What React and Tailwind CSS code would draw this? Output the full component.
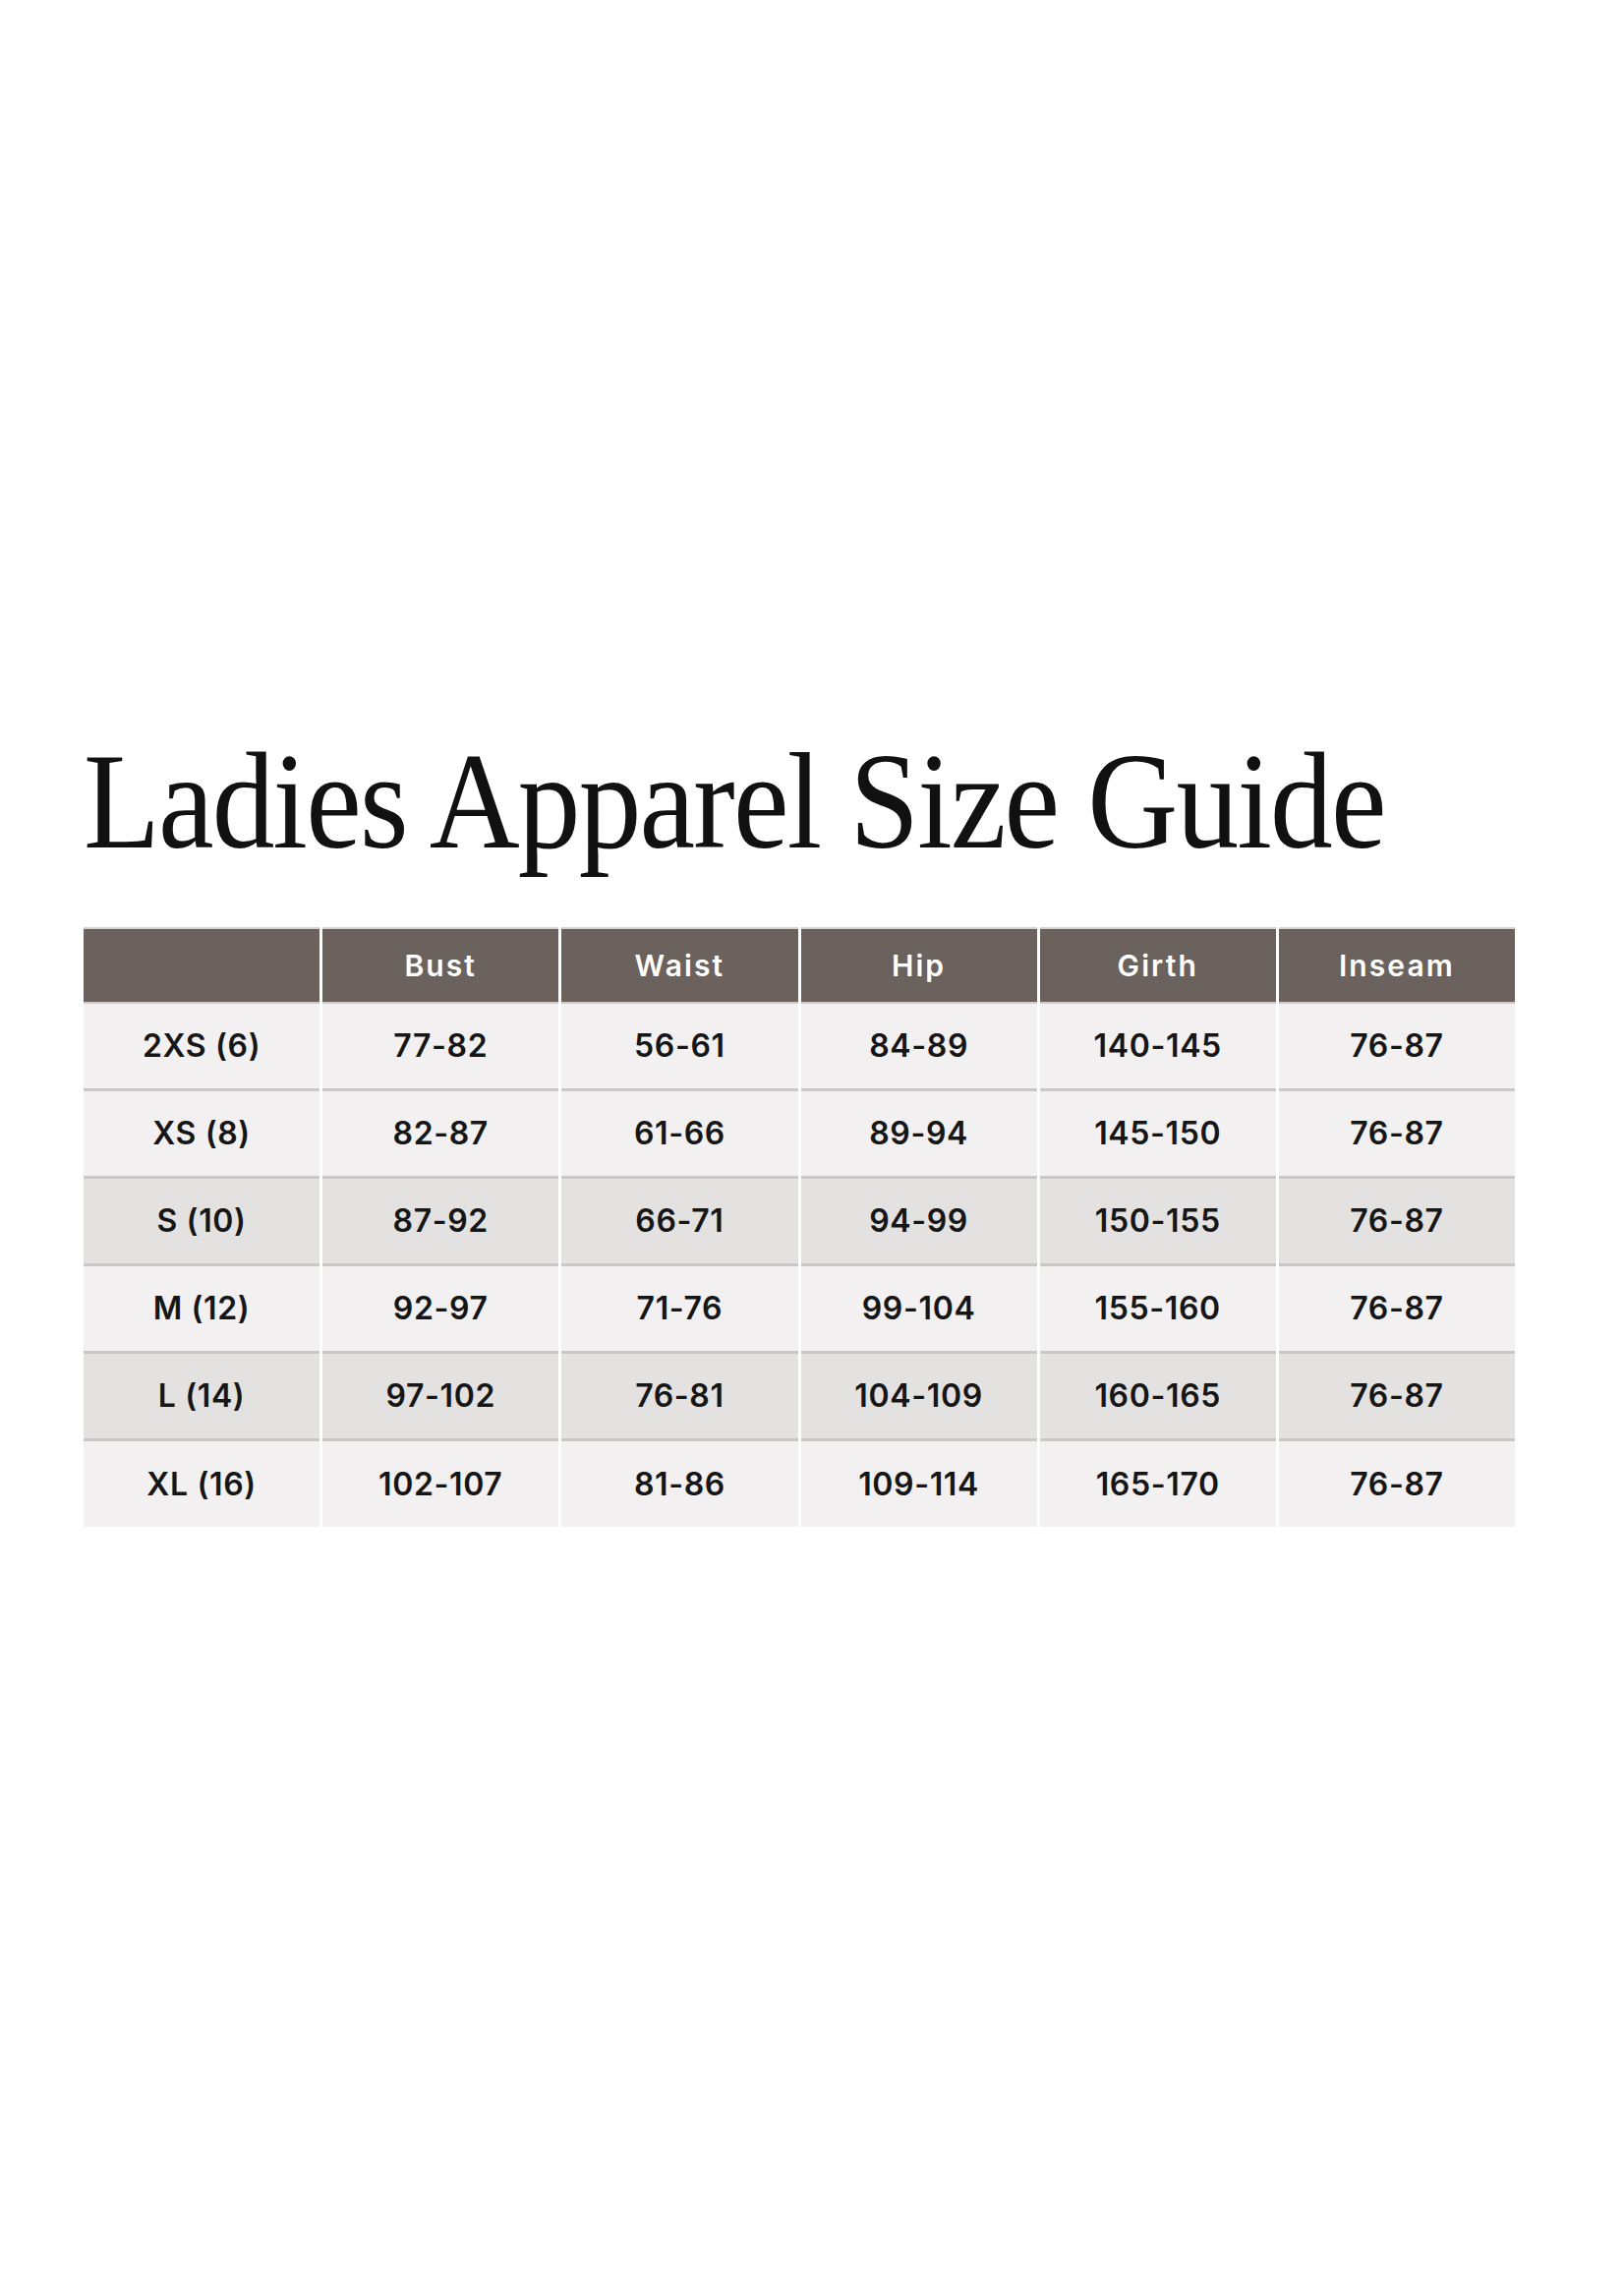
const columns = ['', 'Bust', 'Waist', 'Hip', 'Girth', 'Inseam'];

const rows = [
  { size: '2XS (6)', values: ['77-82', '56-61', '84-89', '140-145', '76-87'], shade: false },
  { size: 'XS (8)', values: ['82-87', '61-66', '89-94', '145-150', '76-87'], shade: false },
  { size: 'S (10)', values: ['87-92', '66-71', '94-99', '150-155', '76-87'], shade: true },
  { size: 'M (12)', values: ['92-97', '71-76', '99-104', '155-160', '76-87'], shade: false },
  { size: 'L (14)', values: ['97-102', '76-81', '104-109', '160-165', '76-87'], shade: true },
  { size: 'XL (16)', values: ['102-107', '81-86', '109-114', '165-170', '76-87'], shade: false },
];

export default function App() {
  return (
    <div className="min-h-[2313px] w-[1652px] bg-white pl-[85px] pt-[745px]">
      {/* Title */}
      <h1 className="origin-left scale-x-[0.91] whitespace-nowrap text-[140px] leading-none tracking-[-2px] text-[#111111] font-['Liberation_Serif',serif]">
        Ladies Apparel Size Guide
      </h1>

      {/* Table */}
      <div className="mt-[58px] grid w-[1456px] grid-cols-6 gap-x-[3px] font-['Inter',sans-serif]">
        {columns.map((c, i) => (
          <div
            key={i}
            className="flex h-[78px] items-center justify-center border-y-2 border-t-[#d6d4d3] border-b-[#cfcccb] bg-[#6c625d] text-[30px] font-semibold tracking-[0.07em] text-white"
          >
            {c}
          </div>
        ))}

        {rows.map((r, ri) =>
          [r.size, ...r.values].map((v, ci) => (
            <div
              key={ri + '-' + ci}
              className={`flex items-center justify-center text-[32px] font-semibold tracking-[0.02em] text-[#161616] ${
                r.shade ? 'bg-[#e4e2e1]' : 'bg-[#f2f0f0]'
              } ${ri < rows.length - 1 ? 'h-[89px] border-b-[3px] border-[#cac8c7]' : 'h-[87px]'}`}
            >
              {v}
            </div>
          ))
        )}
      </div>
    </div>
  );
}
